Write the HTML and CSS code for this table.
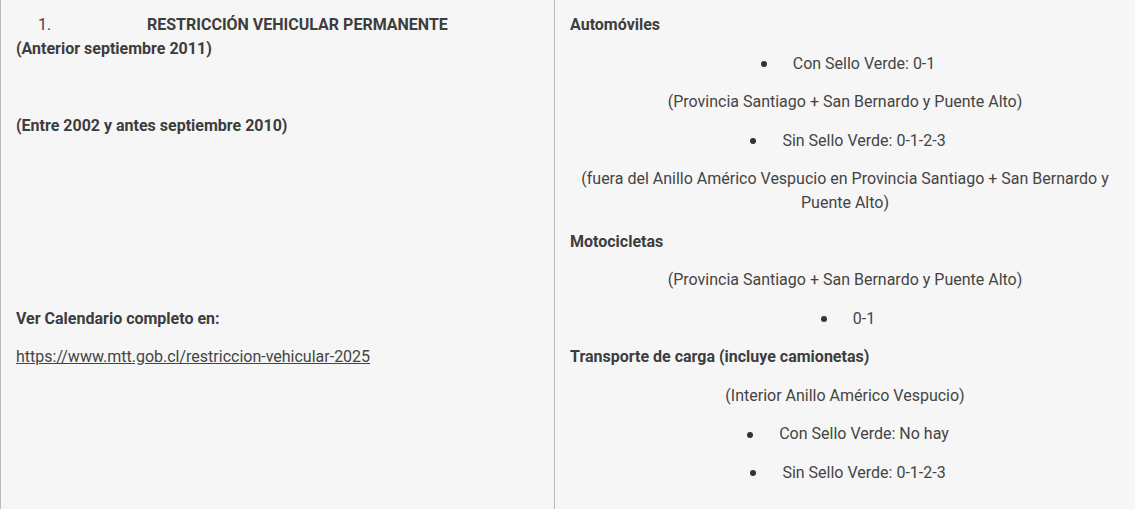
FILE: index.html
```html
<!DOCTYPE html>
<html lang="es">
<head>
<meta charset="utf-8">
<title>Restricción vehicular</title>
<link rel="stylesheet" href="styles.css">
</head>
<body>
<div class="table">
  <div class="cell cell-left">
    <p class="title-row"><span class="num">1.</span><strong>RESTRICCIÓN VEHICULAR PERMANENTE</strong></p>
    <p class="bold">(Anterior septiembre 2011)</p>
    <p>&nbsp;</p>
    <p class="bold">(Entre 2002 y antes septiembre 2010)</p>
    <p>&nbsp;</p>
    <p>&nbsp;</p>
    <p>&nbsp;</p>
    <p>&nbsp;</p>
    <p class="bold">Ver Calendario completo en:</p>
    <p><a class="link" href="#">https://www.mtt.gob.cl/restriccion-vehicular-2025</a></p>
  </div>
  <div class="cell cell-right">
    <p class="bold">Automóviles</p>
    <ul class="items"><li>Con Sello Verde: 0-1</li></ul>
    <p class="center">(Provincia Santiago + San Bernardo y Puente Alto)</p>
    <ul class="items"><li>Sin Sello Verde: 0-1-2-3</li></ul>
    <p class="center">(fuera del Anillo Américo Vespucio en Provincia Santiago + San Bernardo y Puente Alto)</p>
    <p class="bold">Motocicletas</p>
    <p class="center">(Provincia Santiago + San Bernardo y Puente Alto)</p>
    <ul class="items"><li>0-1</li></ul>
    <p class="bold">Transporte de carga (incluye camionetas)</p>
    <p class="center">(Interior Anillo Américo Vespucio)</p>
    <ul class="items">
      <li>Con Sello Verde: No hay</li>
      <li>Sin Sello Verde: 0-1-2-3</li>
    </ul>
  </div>
</div>
</body>
</html>
```
FILE: styles.css
```css
html, body {
  margin: 0;
  padding: 0;
  background: #f6f6f6;
}

body {
  font-family: Roboto, "Liberation Sans", sans-serif;
  font-size: 16px;
  line-height: 24px;
  color: #444;
}

.table {
  display: grid;
  grid-template-columns: 555px 1fr;
  min-height: 540px;
}

.cell {
  padding-top: 13px;
}

.cell-left {
  border-left: 1px solid #bbb;
  border-right: 1px solid #bbb;
  padding-left: 15px;
  padding-right: 15px;
}

.cell-right {
  padding-left: 15px;
  padding-right: 15px;
}

p {
  margin: 0 0 14.5px;
}

.title-row {
  margin-bottom: 0;
}

.num {
  display: inline-block;
  width: 109px;
  margin-left: 22px;
}

.bold,
strong {
  font-weight: 700;
  color: #3d3d3d;
}

.link {
  color: #444;
  text-decoration: underline;
}

.center {
  text-align: center;
}

.items {
  list-style: none;
  margin: 0;
  padding: 0;
}

.items li {
  text-align: center;
  margin: 0 0 14.5px;
}

.items li::before {
  content: "";
  display: inline-block;
  width: 6px;
  height: 6px;
  border-radius: 50%;
  background: #333;
  vertical-align: middle;
  margin-left: 6px;
  margin-right: 26px;
}
```
